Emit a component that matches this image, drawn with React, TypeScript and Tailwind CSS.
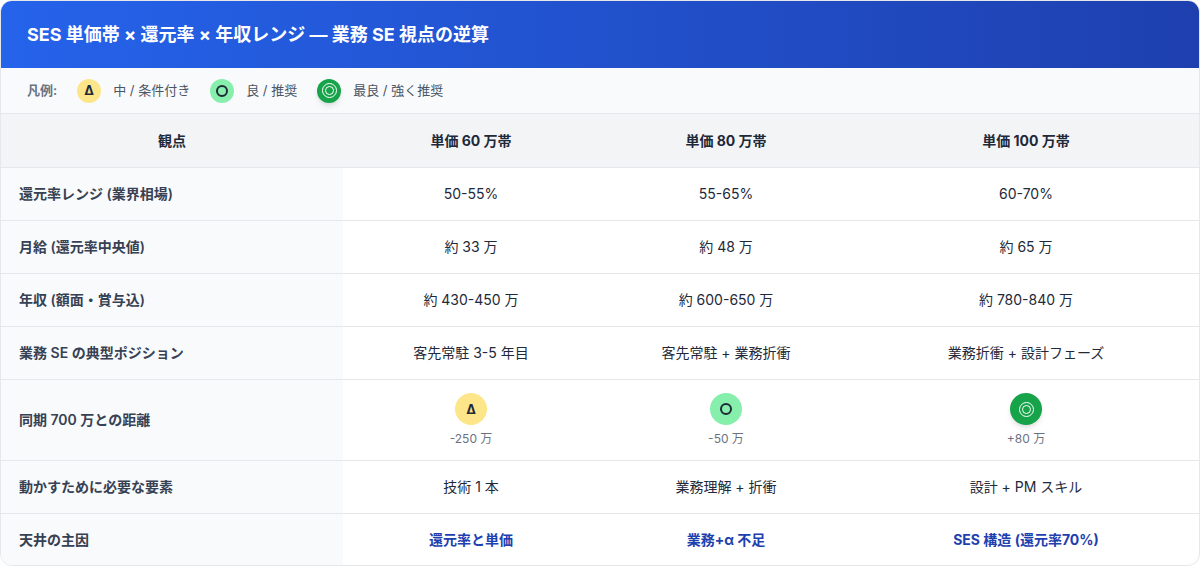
import React from 'react';

type Mark = 'tri' | 'circle' | 'double';

const MarkBadge: React.FC<{ kind: Mark; size?: string }> = ({ kind, size = 'h-8 w-8' }) => {
  if (kind === 'tri') {
    return (
      <span className={`${size} rounded-full bg-[#fde68a] flex items-center justify-center text-[13px] font-bold text-[#1f2937]`}>Δ</span>
    );
  }
  if (kind === 'circle') {
    return (
      <span className={`${size} rounded-full bg-[#86efac] flex items-center justify-center`}>
        <span className="h-3 w-3 rounded-full border-2 border-[#1f2937]" />
      </span>
    );
  }
  return (
    <span className={`${size} rounded-full bg-[#16a34a] shadow-md flex items-center justify-center`}>
      <span className="h-[15px] w-[15px] rounded-full border-[1.5px] border-white flex items-center justify-center">
        <span className="h-[9px] w-[9px] rounded-full border-[1.5px] border-white" />
      </span>
    </span>
  );
};

const rows: { label: string; cells: React.ReactNode[]; tall?: boolean; accent?: boolean }[] = [
  { label: '還元率レンジ (業界相場)', cells: ['50-55%', '55-65%', '60-70%'] },
  { label: '月給 (還元率中央値)', cells: ['約 33 万', '約 48 万', '約 65 万'] },
  { label: '年収 (額面・賞与込)', cells: ['約 430-450 万', '約 600-650 万', '約 780-840 万'] },
  { label: '業務 SE の典型ポジション', cells: ['客先常駐 3-5 年目', '客先常駐 + 業務折衝', '業務折衝 + 設計フェーズ'] },
  {
    label: '同期 700 万との距離',
    tall: true,
    cells: [
      <div className="flex flex-col items-center gap-1.5"><MarkBadge kind="tri" /><span className="text-xs text-gray-500">-250 万</span></div>,
      <div className="flex flex-col items-center gap-1.5"><MarkBadge kind="circle" /><span className="text-xs text-gray-500">-50 万</span></div>,
      <div className="flex flex-col items-center gap-1.5"><MarkBadge kind="double" /><span className="text-xs text-gray-500">+80 万</span></div>,
    ],
  },
  { label: '動かすために必要な要素', cells: ['技術 1 本', '業務理解 + 折衝', '設計 + PM スキル'] },
  { label: '天井の主因', accent: true, cells: ['還元率と単価', '業務+α 不足', 'SES 構造 (還元率70%)'] },
];

const cols = 'grid grid-cols-[342px_256px_254px_1fr]';

export default function App() {
  return (
    <div className="w-[1200px] h-[566px] bg-white" style={{ fontFamily: 'Inter, "Noto Sans CJK JP", sans-serif' }}>
      <div className="h-full rounded-xl border border-gray-200 overflow-hidden flex flex-col">
        <div className="h-[67px] shrink-0 bg-gradient-to-r from-[#2563eb] to-[#1e40af] flex items-center px-[26px]">
          <h1 className="text-white text-lg font-bold">SES 単価帯 × 還元率 × 年収レンジ — 業務 SE 視点の逆算</h1>
        </div>
        <div className="h-[46px] shrink-0 bg-[#f9fafb] border-b border-gray-200 flex items-center px-[26px] gap-3 text-[13px] text-gray-600">
          <span className="font-semibold text-gray-500 mr-2">凡例:</span>
          <MarkBadge kind="tri" size="h-6 w-6" />
          <span className="mr-2">中 / 条件付き</span>
          <MarkBadge kind="circle" size="h-6 w-6" />
          <span className="mr-2">良 / 推奨</span>
          <MarkBadge kind="double" size="h-6 w-6" />
          <span>最良 / 強く推奨</span>
        </div>
        <div className={`${cols} h-[54px] shrink-0 bg-[#f3f4f6] border-b border-gray-200 text-sm font-bold text-gray-800`}>
          <div className="flex items-center justify-center">観点</div>
          <div className="flex items-center justify-center">単価 60 万帯</div>
          <div className="flex items-center justify-center">単価 80 万帯</div>
          <div className="flex items-center justify-center">単価 100 万帯</div>
        </div>
        {rows.map((r) => (
          <div key={r.label} className={`${cols} ${r.tall ? 'h-[81px]' : 'h-[53px]'} shrink-0 border-b border-gray-200 text-sm`}>
            <div className="bg-[#f9fafb] flex items-center pl-[18px] font-semibold text-gray-700">{r.label}</div>
            {r.cells.map((c, i) => (
              <div key={i} className={`flex items-center justify-center ${r.accent ? 'font-bold text-[#1e40af]' : 'text-gray-800'}`}>{c}</div>
            ))}
          </div>
        ))}
      </div>
    </div>
  );
}
